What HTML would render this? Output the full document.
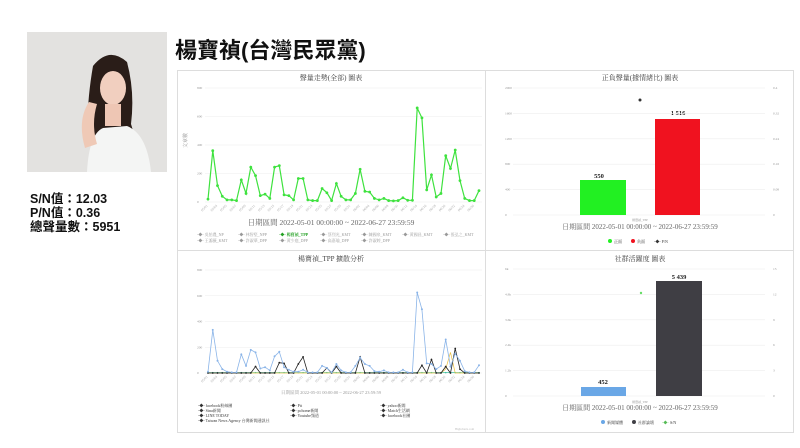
<!DOCTYPE html><html><head><meta charset="utf-8"><style>
body{margin:0;width:800px;height:448px;background:#fff;font-family:"Liberation Sans","Noto Sans CJK TC",sans-serif;overflow:hidden;position:relative}
.ph{position:absolute;left:27px;top:32px;width:140px;height:140px;background:#e3e2e0;overflow:hidden}
.t{position:absolute;left:175px;top:33px;font-size:22px;font-weight:bold;color:#111;font-family:"Liberation Sans","Noto Sans CJK TC",sans-serif}
.st{position:absolute;left:30px;top:192px;font-size:12.5px;font-weight:bold;line-height:14px;color:#111}
svg{position:absolute;left:0;top:0}
text{font-family:"Liberation Serif","Noto Serif CJK SC",serif}
</style></head><body>
<div class="ph"><svg width="140" height="140" viewBox="0 0 140 140">
<path d="M66 34 Q82 14 100 30 Q108 60 104 92 L110 112 L62 114 Q58 80 66 34Z" fill="#2a1d18"/>
<path d="M60 140 Q62 102 76 96 L100 94 Q120 102 124 140Z" fill="#f4f5f4"/>
<ellipse cx="86" cy="56" rx="13" ry="17" fill="#f1cfbf"/>
<path d="M78 72 L94 72 L94 94 L78 94Z" fill="#eec6b4"/>
<path d="M58 116 Q50 88 62 70 L70 72 Q64 92 70 112Z" fill="#efc9b6"/>
</svg></div>
<div class="t">楊寶禎(台灣民眾黨)</div>
<div class="st">S/N值：12.03<br>P/N值：0.36<br>總聲量數：5951</div>
<svg id="s" width="800" height="448" style="pointer-events:none">
<g fill="none" stroke="#ddd" stroke-width="1">
<rect x="177.5" y="70.5" width="308" height="180"/><rect x="485.5" y="70.5" width="308" height="180"/>
<rect x="177.5" y="250.5" width="308" height="182"/><rect x="485.5" y="250.5" width="308" height="182"/>
</g>
<g font-size="7" fill="#444" text-anchor="middle">
<text x="331" y="80">聲量走勢(全部) 圖表</text>
<text x="640" y="80">正負聲量(據情緒比) 圖表</text>
<text x="331" y="261">楊寶禎_TPP 擴散分析</text>
<text x="640" y="261">社群活躍度 圖表</text>
<text x="331" y="225" font-size="7.5" fill="#666">日期區間 2022-05-01 00:00:00 ~ 2022-06-27 23:59:59</text>
<text x="640" y="229" font-size="7" fill="#666">日期區間 2022-05-01 00:00:00 ~ 2022-06-27 23:59:59</text>
<text x="331" y="394" font-size="4.5" fill="#999">日期區間 2022-05-01 00:00:00 ~ 2022-06-27 23:59:59</text>
<text x="640" y="410" font-size="7" fill="#666">日期區間 2022-05-01 00:00:00 ~ 2022-06-27 23:59:59</text>
<text x="599" y="178" font-weight="bold" font-size="6.5" fill="#222">550</text>
<text x="678" y="115" font-weight="bold" font-size="6.5" fill="#222">1 516</text>
<text x="603" y="384" font-weight="bold" font-size="6.5" fill="#222">452</text>
<text x="679" y="279" font-weight="bold" font-size="6.5" fill="#222">5 439</text>
<text x="640" y="221" font-size="3" fill="#999">楊寶禎_TPP</text>
<text x="640" y="403" font-size="3" fill="#999">楊寶禎_TPP</text>
</g>
<g id="grid" stroke="#eee" stroke-width="0.6"></g>
<g font-size="3.5" fill="#999" id="lab"></g>
<rect x="580" y="180" width="46" height="35" fill="#22f022"/>
<rect x="655" y="119" width="45" height="96" fill="#f0121f"/>
<circle cx="640" cy="100" r="1.5" fill="#333"/>
<rect x="581" y="387" width="45" height="9" fill="#6aa7e6"/>
<rect x="656" y="281" width="46" height="115" fill="#3f3e44"/>
<circle cx="641" cy="293" r="1.2" fill="#6d6"/>
<g font-size="4" fill="#333" font-family="Liberation Sans,Noto Sans CJK TC,sans-serif">
<circle cx="610" cy="241" r="2" fill="#22f022"/><text x="614" y="243">正面</text>
<circle cx="633" cy="241" r="2" fill="#f0121f"/><text x="637" y="243">負面</text>
<text x="654" y="243">-◆- P/N</text>
<circle cx="603" cy="422" r="2" fill="#6aa7e6"/><text x="607" y="424">新聞媒體</text>
<circle cx="634" cy="422" r="2" fill="#3f3e44"/><text x="638" y="424">社群論壇</text>
<text x="662" y="424" fill="#5b5">-◆- </text><text x="670" y="424">S/N</text>
</g>
<g font-size="4" fill="#999" font-family="Liberation Sans,Noto Sans CJK TC,sans-serif" id="leg1"></g>
<g font-size="4" fill="#333" font-family="Liberation Sans,Noto Sans CJK TC,sans-serif">
<text x="198" y="407">-◆- facebook粉絲團</text><text x="290" y="407">-◆- Ptt</text><text x="380" y="407">-◆- yahoo新聞</text>
<text x="198" y="412">-◆- Sina新聞</text><text x="290" y="412">-◆- pchome新聞</text><text x="380" y="412">-◆- Match生活網</text>
<text x="198" y="417">-◆- LINE TODAY</text><text x="290" y="417">-◆- Youtube頻道</text><text x="380" y="417">-◆- facebook社團</text>
<text x="198" y="422">-◆- Taiwan News Agency 台灣新聞通訊社</text>
</g>
<g font-size="3" fill="#bbb" font-family="Liberation Sans,sans-serif"><text x="455" y="430">Highcharts.com</text></g>
<g id="dates" font-size="3.5" fill="#aaa" font-family="Liberation Sans,sans-serif"></g>
</svg>
<script>
var S=document.getElementById('s'),ns='http://www.w3.org/2000/svg';
function el(t,a,p){var e=document.createElementNS(ns,t);for(var k in a)e.setAttribute(k,a[k]);(p||S).appendChild(e);return e}
var G=document.getElementById('grid'),L=document.getElementById('lab'),D=document.getElementById('dates');
function grid(x1,x2,y0,y1,n,labs,rl){for(var i=0;i<=n;i++){var y=y0+(y1-y0)*i/n;el('line',{x1:x1,x2:x2,y1:y,y2:y},G);var t=el('text',{x:x1-8,y:y+1},L);t.textContent=labs[i];if(rl){var r=el('text',{x:x2+8,y:y+1},L);r.textContent=rl[i]}}}
grid(205,482,202,88,4,['0','200','400','600','800']);
grid(205,482,373,270,4,['0','200','400','600','800']);
grid(513,765,215,88,5,['0','400','800','1200','1600','2000'],['0','0.08','0.16','0.24','0.32','0.4']);
grid(513,765,396,269,5,['0','1.2k','2.4k','3.6k','4.8k','6k'],['0','3','6','9','12','15']);
function dates(y){for(var i=0;i<29;i++){var x=208+271*(2*i)/57,d=new Date(2022,4,1+2*i);var s=('0'+(d.getMonth()+1)).slice(-2)+'/'+('0'+d.getDate()).slice(-2);var t=el('text',{x:x,y:y,'text-anchor':'end',transform:'rotate(-45 '+x+' '+y+')'},D);t.textContent=s}}
dates(206);dates(377);
var v=[20,360,115,40,15,15,10,155,60,245,185,45,55,25,245,255,50,45,15,165,165,15,10,10,95,65,10,130,40,15,15,60,230,75,70,25,15,25,10,8,10,30,12,12,660,590,85,190,35,60,325,235,365,150,25,10,10,80];
function line(vals,y0,y1,col,w,r){var n=vals.length,pts=[];for(var i=0;i<n;i++){var x=208+271*i/(n-1),y=y0+(y1-y0)*vals[i]/800;pts.push(x.toFixed(1)+','+y.toFixed(1));if(r)el('circle',{cx:x,cy:y,r:r,fill:col})}el('polyline',{points:pts.join(' '),fill:'none',stroke:col,'stroke-width':w})}
line(v,202,88,'#3ee23e',1.2,1.4);
var fb=[10,335,95,30,10,5,5,145,55,180,160,35,45,20,130,165,45,25,10,10,25,5,5,5,55,40,5,70,20,5,5,55,120,70,55,15,10,20,5,5,5,25,5,5,625,495,75,70,30,55,260,50,150,95,15,5,5,60];
var ptt=[0,0,0,0,0,0,0,0,0,0,50,0,0,0,0,80,75,0,0,70,125,0,0,0,0,40,0,50,0,0,0,0,125,0,0,0,0,0,0,0,0,0,0,0,0,60,0,105,0,0,50,0,190,30,0,0,0,0];
var ln=[0,0,0,0,0,0,0,0,0,0,0,0,0,0,0,0,0,0,0,0,0,0,0,0,0,0,0,0,0,0,0,0,0,0,0,0,0,0,0,0,0,0,0,0,0,0,0,0,0,0,30,160,0,0,0,0,0,0];
var z=v.map(function(){return 3});
line(z,373,270,'#40c0a0',0.8,0.8);
line(ln,373,270,'#e8c040',0.7,0);
line(ptt,373,270,'#222',0.8,0.9);
line(fb,373,270,'#8ab4e8',0.8,1);
var le=document.getElementById('leg1'),items=['-◆- 吳怡農_NP','-◆- 林智堅_NPP','-◆- 楊寶禎_TPP','-◆- 蔡烈光_KMT','-◆- 陳國泉_KMT','-◆- 黃國昌_KMT','-◆- 張弘之_KMT','-◆- 王鴻薇_KMT','-◆- 許淑華_DPP','-◆- 黃少庭_DPP','-◆- 高嘉瑜_DPP','-◆- 許淑婷_DPP'];
items.forEach(function(s,i){var r=i<7?0:1,c=i<7?i:i-7;var t=el('text',{x:197+c*41,y:236+r*6},le);t.textContent=s;if(i==2){t.setAttribute('fill','#22a022');t.setAttribute('font-weight','bold')}});
var a=el('text',{x:187,y:148,'font-size':5,fill:'#999',transform:'rotate(-90 187 148)'});a.textContent='文章數';
</script>
</body></html>
